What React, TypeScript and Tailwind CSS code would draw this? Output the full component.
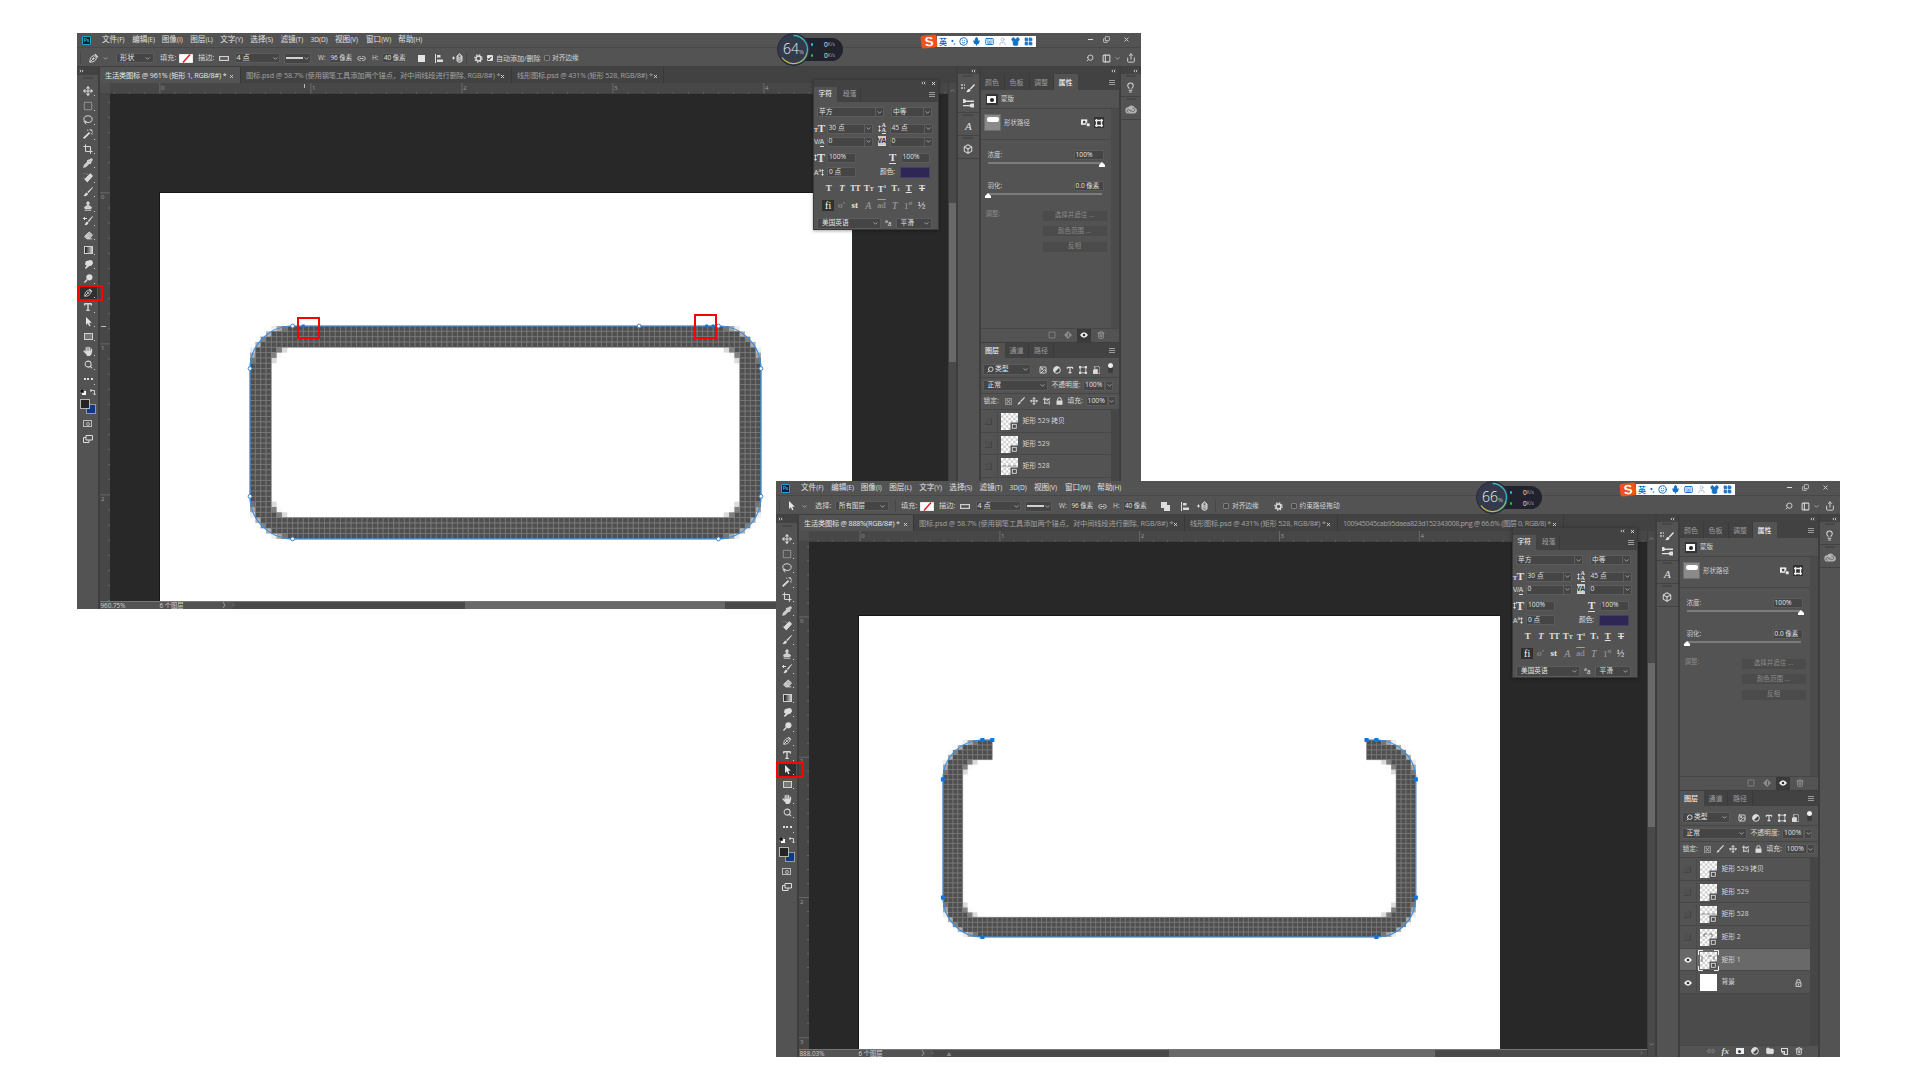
import React from "react";
import {
  Move, SquareDashed, Lasso, Crop, Pipette, Stamp, Eraser, Type,
  Search, Trash2, Lightbulb, Box, Smile, Mic, Keyboard, Shirt, LayoutGrid, Link2,
  Image as ImageIcon, Folder, Share, User, Check,
  X, Copy, PanelLeft, Minus,
} from "lucide-react";

type Variant = "pen" | "select";

const ink = "#dcdcdc";

/* ---------- small shared pieces ---------- */

const Chev = ({ c = "" }: { c?: string }) => (
  <svg viewBox="0 0 6 4" className={`h-[3px] w-[5px] shrink-0 ${c}`} fill="none" stroke="#bdbdbd" strokeWidth="1">
    <path d="M.5.5 3 3 5.5.5" />
  </svg>
);

const Burger = ({ c = "" }: { c?: string }) => (
  <svg viewBox="0 0 6 5" className={`h-[5px] w-[6px] shrink-0 ${c}`} fill="#9a9a9a">
    <path d="M0 0h6v1H0zM0 2h6v1H0zM0 4h6v1H0z" />
  </svg>
);

const Arrows = ({ flip = false, c = "" }: { flip?: boolean; c?: string }) => (
  <svg viewBox="0 0 6 4" className={`h-[4px] w-[5px] shrink-0 ${flip ? "rotate-180" : ""} ${c}`} fill="none" stroke="#d0d0d0" strokeWidth="1.1">
    <path d="M2.5.5 1 2l1.500 1.500M5.200.5 3.700 2l1.500 1.500" />
  </svg>
);

const Cursor = ({ c = "" }: { c?: string }) => (
  <svg viewBox="0 0 8 12" className={`h-[10px] w-[7px] shrink-0 ${c}`} fill="#e6e6e6">
    <path d="M1 0v9.500l2.200-2 1.600 3.700 1.600-.7L4.900 7H8z" />
  </svg>
);

const PenNib = ({ s = 10 }: { s?: number }) => (
  <svg viewBox="0 0 12 12" width={s} height={s} className="shrink-0" fill="none" stroke={ink} strokeWidth="1.100">
    <path d="M1 11c0-4 1-7 5-8l3 3c-1 4-4 5-8 5z" />
    <path d="M1 11 5 7" />
    <path d="M7 1.500 10.500 5" strokeWidth="1.800" />
    <circle cx="5.400" cy="6.600" r=".8" fill={ink} />
  </svg>
);

const Gear = () => (
  <svg viewBox="0 0 10 10" className="h-[9px] w-[9px] shrink-0" fill="none" stroke={ink}>
    <circle cx="5" cy="5" r="2.700" strokeWidth="1.700" />
    <circle cx="5" cy="5" r="4.100" strokeWidth="1.300" strokeDasharray="1.610 1.610" />
  </svg>
);

const EyeGlyph = () => (
  <svg viewBox="0 0 8 6" className="h-[6px] w-[8px] shrink-0">
    <path d="M0 3Q4-2.500 8 3 4 8.500 0 3z" fill="#f2f2f2" />
    <circle cx="4" cy="3" r="1.300" fill="#2c2c2c" />
  </svg>
);

const LockGlyph = ({ c = "", open = false }: { c?: string; open?: boolean }) => (
  <svg viewBox="0 0 7 8" className={`h-[8px] w-[7px] shrink-0 ${c}`} fill="none" stroke={ink}>
    <path d="M1.800 3.500V2.300a1.700 1.700 0 0 1 3.400 0v1.200" />
    {open ? <path d="M1 3.800h5v3.600H1zM3.500 5v1.300" strokeWidth=".9" /> : <path d="M.5 3.500h6v4.300h-6z" fill={ink} stroke="none" />}
  </svg>
);

const HalfDisc = ({ c = "" }: { c?: string }) => (
  <svg viewBox="0 0 8 8" className={`h-[8px] w-[8px] shrink-0 ${c}`}>
    <circle cx="4" cy="4" r="3.300" fill="#444" stroke={ink} strokeWidth="1" />
    <path d="M6.500 1.500a3.500 3.500 0 0 0-5 5z" fill={ink} />
  </svg>
);

const BoxedPoints = ({ c = "" }: { c?: string }) => (
  <svg viewBox="0 0 8 8" className={`h-[8px] w-[8px] shrink-0 ${c}`} fill={ink}>
    <path d="M0 0h2.200v2.200H0zM5.800 0H8v2.200H5.800zM0 5.800h2.200V8H0zM5.800 5.800H8V8H5.800z" />
    <path d="M1.200 1.200h5.600v5.600H1.200z" fill="none" stroke={ink} strokeWidth=".8" />
  </svg>
);

/* ---------- menu bar ---------- */

const menus: [string, string, string][] = [
  ["文件", "(F)", "w-[30.2px]"],
  ["编辑", "(E)", "w-[29.6px]"],
  ["图像", "(I)", "w-[28.5px]"],
  ["图层", "(L)", "w-[29.9px]"],
  ["文字", "(Y)", "w-[30.2px]"],
  ["选择", "(S)", "w-[30.1px]"],
  ["滤镜", "(T)", "w-[30px]"],
  ["", "3D(D)", "w-[24.5px]"],
  ["视图", "(V)", "w-[31px]"],
  ["窗口", "(W)", "w-[32.4px]"],
  ["帮助", "(H)", "w-[30px]"],
];

const MenuBar = () => (
  <div className="flex h-[15px] shrink-0 items-center border-b border-[#484848] text-[7.600px] leading-none text-[#e2e2e2]">
    <div className="flex w-[25px] shrink-0 pl-[5px]">
      <div className="flex h-[9px] w-[9px] items-center justify-center rounded-[1px] border border-[#1da6cf] bg-[#04202c] text-[5px] font-semibold text-[#31c5f0]">
        Ps
      </div>
    </div>
    {menus.map(([a, b, w]) => (
      <span key={b} className={`shrink-0 whitespace-nowrap ${w}`}>
        {a}
        <span className="text-[6.600px]">{b}</span>
      </span>
    ))}
    <div className="mb-[2px] ml-auto flex items-center pr-[11px]">
      <Minus size={7} strokeWidth={4} color={ink} className="mr-[9px]" />
      <Copy size={7} strokeWidth={2.500} color={ink} className="mr-[13px] -scale-x-100 rotate-180" />
      <X size={7} strokeWidth={3} color={ink} />
    </div>
  </div>
);

/* ---------- options bar ---------- */

const Field = ({ c, children }: { c: string; children?: React.ReactNode }) => (
  <div className={`flex shrink-0 items-center rounded-[1px] border border-[#5b5b5b] bg-[#454545] leading-none text-[#e4e4e4] ${c}`}>{children}</div>
);

const FillSwatch = () => (
  <svg viewBox="0 0 14 9" className="h-[9px] w-[14px]">
    <rect width="14" height="9" fill="#fff" stroke="#aaa" strokeWidth=".5" />
    <path d="M4 8.500 11 .5" stroke="#e0202a" strokeWidth="1.500" />
  </svg>
);

const StrokeGlyph = () => (
  <svg viewBox="0 0 10 5" className="h-[5px] w-[10px]" fill="none" stroke="#cfcfcf" strokeWidth="1.200">
    <rect x=".6" y=".6" width="8.800" height="3.800" />
  </svg>
);

const AlignGlyph = () => (
  <svg viewBox="0 0 8 9" className="h-[9px] w-[8px]" fill={ink}>
    <path d="M0 0h1v9H0zM2 1h3.500v2.500H2zM2 5.500h6V8H2z" />
  </svg>
);

const ArrangeGlyph = () => (
  <svg viewBox="0 0 11 10" className="h-[10px] w-[11px]" fill="none" stroke={ink} strokeWidth="1">
    <path d="M0 5h3M1.500 3.500v3" />
    <path d="M5 3 7.500.8 10 3 7.500 4.500zM5 5l2.500 1.600L10 5M5 3v5l2.500 1.500L10 8V3" fill="#8f8f8f" />
  </svg>
);

const CheckBox = ({ on = false }: { on?: boolean }) =>
  on ? (
    <span className="flex h-[6px] w-[6px] items-center justify-center rounded-[1px] bg-[#e4e4e4]">
      <Check size={5} strokeWidth={5} color="#333" />
    </span>
  ) : (
    <span className="block h-[6px] w-[6px] rounded-[1px] border border-[#7d7d7d] bg-[#474747]" />
  );

const Sep = ({ c }: { c: string }) => (
  <div className={`flex shrink-0 ${c}`}>
    <div className="h-[12px] w-px bg-[#464646]" />
  </div>
);

const ShapeOptions = ({ w = "w-[13px]" }: { w?: string }) => (
  <>
    <div className="w-[19px] shrink-0">填充:</div>
    <div className="w-[19px] shrink-0"><FillSwatch /></div>
    <div className="w-[21px] shrink-0">描边:</div>
    <div className="w-[15.500px] shrink-0"><StrokeGlyph /></div>
    <Field c="h-[10px] w-[45px] justify-between px-[1px]"><span>4 点</span><Chev /></Field>
    <div className="w-[4px] shrink-0" />
    <Field c="h-[11px] w-[27px] justify-between px-[1px]">
      <span className="h-[1.500px] w-[17px] shrink-0 bg-[#d0d0d0]" /><Chev />
    </Field>
    <div className="w-[7.500px] shrink-0" />
    <div className="w-[10.500px] shrink-0 text-[6.500px]">W:</div>
    <Field c="h-[10px] w-[23.500px] pl-[1px] text-[6.400px] tracking-[-0.1px] whitespace-nowrap">96 像素</Field>
    <div className="flex w-[20px] shrink-0 pl-[5px]"><Link2 size={9} strokeWidth={2.300} /></div>
    <div className="w-[10px] shrink-0 text-[6.500px]">H:</div>
    <Field c="h-[10px] w-[23px] pl-[1px] text-[6.400px] tracking-[-0.1px] whitespace-nowrap">40 像素</Field>
    <div className={`shrink-0 ${w}`} />
  </>
);

const OptionsBar = ({ variant }: { variant: Variant }) => (
  <div className="flex h-[19px] shrink-0 items-center border-b border-[#3f3f3f] pt-[2px] pl-[3px] text-[7.200px] leading-none text-[#d4d4d4]">
    <div className="w-[9px] shrink-0"><div className="h-[12px] w-px bg-[#464646]" /></div>
    <div className="w-[14px] shrink-0">{variant === "pen" ? <PenNib /> : <Cursor />}</div>
    {variant === "pen" ? (
      <>
        <Chev c="mr-[8px]" />
        <Field c="h-[10px] w-[38px] justify-between px-[3px]"><span>形状</span><Chev /></Field>
        <div className="w-[6px] shrink-0" />
        <ShapeOptions />
        <div className="flex w-[17px] shrink-0"><div className="h-[7px] w-[7px] bg-[#e4e4e4]" /></div>
        <div className="w-[17px] shrink-0"><AlignGlyph /></div>
        <div className="w-[14px] shrink-0"><ArrangeGlyph /></div>
        <Sep c="w-[7.500px]" />
        <div className="w-[13px] shrink-0"><Gear /></div>
        <div className="w-[9.500px] shrink-0"><CheckBox on /></div>
        <div className="w-[47.500px] shrink-0 text-[7px] whitespace-nowrap">自动添加/删除</div>
        <div className="w-[8.500px] shrink-0"><CheckBox /></div>
        <div className="shrink-0 text-[6.700px] whitespace-nowrap">对齐边缘</div>
      </>
    ) : (
      <>
        <Chev c="mr-[8px]" />
        <div className="w-[20px] shrink-0">选择:</div>
        <Field c="h-[10px] w-[54px] justify-between px-[3px] text-[6.500px]"><span>所有图层</span><Chev /></Field>
        <div className="w-[6px] shrink-0" />
        <Sep c="w-[6px]" />
        <ShapeOptions w="w-[15px]" />
        <div className="w-[19.500px] shrink-0">
          <svg viewBox="0 0 9 9" className="h-[9px] w-[9px]" fill={ink}><path d="M0 0h6v3h3v6H3V6H0z" /></svg>
        </div>
        <div className="w-[16px] shrink-0"><AlignGlyph /></div>
        <div className="w-[18px] shrink-0"><ArrangeGlyph /></div>
        <Sep c="w-[8px]" />
        <div className="w-[9.500px] shrink-0"><CheckBox /></div>
        <div className="w-[42px] shrink-0 text-[6.700px] whitespace-nowrap">对齐边缘</div>
        <div className="w-[16.500px] shrink-0"><Gear /></div>
        <div className="w-[9px] shrink-0"><CheckBox /></div>
        <div className="shrink-0 text-[6.700px] whitespace-nowrap">约束路径拖动</div>
      </>
    )}
    <div className="ml-auto flex items-center pr-[5px]">
      <Search size={8} strokeWidth={2.800} className="mr-[8px] -scale-x-100" />
      <PanelLeft size={9} strokeWidth={2.800} className="mr-[4px]" />
      <Chev c="mr-[6px]" />
      <Share size={10} strokeWidth={2.300} />
    </div>
  </div>
);

/* ---------- toolbar ---------- */

const tools: React.ReactNode[] = [
  <Move size={10} strokeWidth={2.700} />,
  <SquareDashed size={10} strokeWidth={2} />,
  <Lasso size={10} strokeWidth={2.400} />,
  <svg viewBox="0 0 10 10" width="10" height="10" fill={ink}><path d="M6 3 7.200 4.200 1.400 10 0 8.700zM4.500.5l1 1-.6.6-1-1zM8.500.3l1 .9L8.200 2.500l-1-.9zM8.600 4l1.200 1-.7.7-1.100-1zM6.500 0h1v1h-1zM9 2.600h1v1H9z" /></svg>,
  <Crop size={10} strokeWidth={2.700} />,
  <Pipette size={10} strokeWidth={2.600} fill="#bbb" />,
  <svg viewBox="0 0 10 10" width="10" height="10"><path d="M7.300.6 9.600 2.900 4.300 8.900 1.700 6.300z" fill="#d8d8d8" stroke="#eee" strokeWidth=".7" /><path d="M4.700 2A2.800 2.800 0 1 0 1.600 5.500" fill="none" stroke="#aaa" strokeWidth=".9" strokeDasharray="1 .9" /></svg>,
  <svg viewBox="0 0 10 10" width="10" height="10" fill={ink}><path d="M9.500 0 10 .6 5.500 6 4.300 4.900zM3.700 5.500l1.300 1.200C4.700 8.700 2.500 9.500.5 9c1.200-.8 1-3 3.200-3.500z" /></svg>,
  <Stamp size={10} strokeWidth={2.400} fill="#ccc" />,
  <svg viewBox="0 0 10 10" width="10" height="10" fill={ink}><path d="M9.500 0 10 .6 6 6 4.800 4.900zM4.200 5.500l1.300 1.200C5.200 8.700 3 9.500 1.500 9c1-.8.8-3 2.700-3.500zM0 2h4v1H0zM1 1h1v3H1z" /></svg>,
  <Eraser size={9} strokeWidth={2.500} fill="#bbb" />,
  <div className="h-[8px] w-[9px] border border-[#d0d0d0] bg-linear-to-r from-[#222] to-[#ccc]" />,
  <svg viewBox="0 0 10 10" width="9" height="9" fill={ink}><path d="M2 1.500 7 0c2 0 3 1.500 3 3.500L8.500 6 5.500 7 2 10 1 9l2-3-2-1z" /></svg>,
  <svg viewBox="0 0 10 10" width="9" height="9" fill={ink}><circle cx="6" cy="3.700" r="3.400" /><path d="M3 5.500 4.200 6.700 1 10 0 9z" /></svg>,
  <PenNib s={9} />,
  <Type size={10} strokeWidth={3.400} />,
  <Cursor />,
  <div className="h-[7px] w-[9px] border border-[#d0d0d0] bg-[#777]" />,
  <svg viewBox="0 0 10 10" width="10" height="10" stroke={ink} strokeWidth="1.200" strokeLinecap="round" fill={ink}>
    <path d="M3.200 5V1.700M5 5V1M6.700 5V1.500M8.500 5.500V3M1 5l1.800 2" /><path d="M3 5.300h5.500L7.800 8.500 6.500 9.400H4.300z" />
  </svg>,
  <Search size={9} strokeWidth={2.700} />,
  <div className="flex gap-[1.500px]">
    <i className="h-[2px] w-[2px] bg-[#ddd]" /><i className="h-[2px] w-[2px] bg-[#ddd]" /><i className="h-[2px] w-[2px] bg-[#ddd]" />
  </div>,
];

const Toolbar = ({ variant }: { variant: Variant }) => {
  const active = variant === "pen" ? 14 : 16;
  return (
    <div className="mr-[1.500px] flex w-[21px] shrink-0 flex-col bg-[#535353] text-[#d6d6d6]">
      <div className="flex h-[8px] shrink-0 items-center bg-[#424242] pl-[2px]"><Arrows flip /></div>
      <div className="flex h-[9px] shrink-0 justify-center pt-[2px]"><div className="h-[2px] w-[10px] bg-[#484848]" /></div>
      {tools.map((t, i) => (
        <div key={i} className="relative flex h-[14.410px] shrink-0 items-center justify-center pr-[1px] pl-[2px]">
          <div className={`flex h-[13px] w-[17px] items-center justify-center ${i === active ? "bg-[#303030]" : ""}`}>{t}</div>
          <i className="absolute right-[3px] bottom-[2px] h-[1px] w-[1px] bg-[#ccc]" />
          {i === active && (
            <div className={`absolute left-0 z-10 h-[16px] border-2 border-[#f00] ${variant === "pen" ? "w-[26px]" : "w-[28px]"}`} />
          )}
        </div>
      ))}
      <div className="flex h-[11px] shrink-0 items-center gap-[4px] pl-[3px]">
        <svg viewBox="0 0 6 6" className="h-[6px] w-[6px]"><rect x="2" y="2" width="4" height="4" fill="#fff" /><rect width="4" height="4" fill="#111" stroke="#ccc" strokeWidth=".5" /></svg>
        <svg viewBox="0 0 6 6" className="h-[6px] w-[6px]" fill="none" stroke="#ccc"><path d="M0 1.500h4.500V6M1.500 0 0 1.500 1.500 3M3 4.500 4.500 6 6 4.500" /></svg>
      </div>
      <div className="relative h-[18px] shrink-0">
        <div className="absolute top-[6px] left-[8.500px] h-[10px] w-[10px] border border-[#9a9a9a] bg-[#0b3a86]" />
        <div className="absolute top-px left-[3px] h-[10px] w-[10px] border border-[#b5b5b5] bg-[#242424]" />
      </div>
      <div className="flex h-[16px] shrink-0 items-center justify-center">
        <div className="flex h-[7px] w-[9px] items-center justify-center border border-[#bbb]"><i className="h-[4px] w-[4px] rounded-full border border-[#bbb]" /></div>
      </div>
      <div className="flex h-[14px] shrink-0 items-center justify-center">
        <svg viewBox="0 0 10 8" className="h-[8px] w-[10px]" fill="none" stroke={ink}><path d="M3 .5h6.500v4.500H3z" /><path d="M3 2.500H.5v5h5.500V5" /></svg>
      </div>
    </div>
  );
};

/* ---------- document ---------- */

const range = (n: number) => Array.from({ length: n }, (_, i) => i);

const HRuler = ({ zero, step, mark }: { zero: number; step: number; mark?: number }) => (
  <svg className="h-[11px] w-[848px] shrink-0" viewBox="0 0 848 11" fontSize="6" fill="#9c9c9c">
    <rect width="848" height="11" fill="#474747" />
    <rect width="10" height="11" fill="#4f4f4f" />
    {range(62).map((i) => {
      const x = zero + (i - 4) * (step / 10);
      const major = (i - 4) % 10 === 0;
      return x > 14 ? <rect key={i} x={x} y={major ? 0 : 9} width=".8" height={major ? 11 : 2} fill="#707070" /> : null;
    })}
    {range(5).map((i) => <text key={i} x={zero + i * step + 1.500} y="6.500">{i}</text>)}
    {mark && <rect x={mark} y="1" width="1" height="4" fill="#bbb" />}
    <rect y="10.500" width="848" height=".5" fill="#3a3a3a" />
  </svg>
);

const VRuler = ({ zero, step, mark }: { zero: number; step: number; mark?: number }) => (
  <svg className="h-[507px] w-[10px] shrink-0" viewBox="0 0 10 507" fontSize="6" fill="#9c9c9c">
    <rect width="10" height="507" fill="#474747" />
    {range(44).map((i) => {
      const y = zero + (i - 9) * (step / 10);
      const major = (i - 9) % 10 === 0;
      return y > 0 ? <rect key={i} y={y} x={major ? 0 : 8} height=".8" width={major ? 10 : 2} fill="#707070" /> : null;
    })}
    {range(4).map((i) => <text key={i} x="1" y={zero + i * step + 6.500}>{i}</text>)}
    {mark && <rect x="1" y={mark} width="5" height="1" fill="#bbb" />}
  </svg>
);

const inRound = (x: number, y: number, x0: number, y0: number, x1: number, y1: number, r: number) => {
  if (x < x0 || x > x1 || y < y0 || y > y1) return false;
  const cx = Math.min(Math.max(x, x0 + r), x1 - r);
  const cy = Math.min(Math.max(y, y0 + r), y1 - r);
  return (x - cx) ** 2 + (y - cy) ** 2 <= r * r;
};

/* Pixel coverage of a 96x40 rounded frame with a 4px inner stroke. */
const pixels = range(96 * 40)
  .map((n) => {
    const px = n % 96;
    const py = Math.floor(n / 96);
    let hit = 0;
    for (let a = 0; a < 4; a++)
      for (let b = 0; b < 4; b++) {
        const x = px + (a + 0.5) / 4;
        const y = py + (b + 0.5) / 4;
        if (inRound(x, y, 0, 0, 96, 40, 8) && !inRound(x, y, 4, 4, 92, 36, 4)) hit++;
      }
    return { x: px, y: py, v: hit / 16 };
  })
  .filter((p) => p.v > 0);

const PixelFrame = ({ s, open }: { s: number; open: boolean }) => {
  const shown = pixels.filter((p) => !(open && p.y < 4 && p.x >= 10 && p.x < 86));
  const full = shown.filter((p) => p.v === 1);
  const d = full.map((p) => `M${p.x} ${p.y}h1v1h-1z`).join("");
  const outline = open
    ? "M10 0H8A8 8 0 0 0 0 8V32A8 8 0 0 0 8 40H88A8 8 0 0 0 96 32V8A8 8 0 0 0 88 0H86"
    : "M8 0H88A8 8 0 0 1 96 8V32A8 8 0 0 1 88 40H8A8 8 0 0 1 0 32V8A8 8 0 0 1 8 0Z";
  const hollow = [[8, 0], [73.100, 0], [88, 0], [0, 8], [96, 8], [0, 32], [96, 32], [8, 40], [88, 40]];
  const solid = open
    ? [[8, 0], [10, 0], [86, 0], [88, 0], [0, 8], [96, 8], [0, 32], [96, 32], [8, 40], [88, 40]]
    : [[10, 0], [85.800, 0], [87, 0]];
  return (
    <svg width={96 * s + 10} height={40 * s + 10} viewBox={`${-5 / s} ${-5 / s} ${96 + 10 / s} ${40 + 10 / s}`}>
      {shown.filter((p) => p.v < 1).map((p) => (
        <rect key={`${p.x}-${p.y}`} x={p.x} y={p.y} width="1" height="1" fill="#585858" opacity={p.v ** 1.300} />
      ))}
      <path d={d} fill="#4f4f4f" stroke="#808080" strokeWidth=".1" />
      <path d={outline} fill="none" stroke="#3f8edb" strokeWidth={1.200 / s} />
      {!open && hollow.map(([x, y]) => (
        <circle key={`h${x}-${y}`} cx={x} cy={y} r={1.900 / s} fill="#fff" stroke="#3a80c4" strokeWidth={1 / s} />
      ))}
      {solid.map(([x, y]) => (
        <rect key={`s${x}-${y}`} x={x - (open ? 2.100 : 1.600) / s} y={y - (open ? 2.100 : 1.600) / s} width={(open ? 4.200 : 3.200) / s} height={(open ? 4.200 : 3.200) / s} rx={0.6 / s} fill="#0f75dc" />
      ))}
    </svg>
  );
};

type Tab = { text: string; box: string; label: string };

const DocTabs = ({ tabs }: { tabs: Tab[] }) => (
  <div className="flex h-[16px] shrink-0 bg-[#424242] text-[7.200px] leading-none">
    {tabs.map((t, i) => (
      <div key={t.text} className={`flex shrink-0 items-center border-r border-[#383838] pt-[2px] pl-[5.500px] ${t.box} ${i === 0 ? "bg-[#535353] text-[#e6e6e6]" : "text-[#a2a2a2]"}`}>
        <span className={`shrink-0 whitespace-nowrap ${t.label}`}>{t.text}</span>
        <X size={5} strokeWidth={4.500} color="#d0d0d0" />
      </div>
    ))}
  </div>
);

const Document = ({ variant }: { variant: Variant }) => {
  const pen = variant === "pen";
  const tabs: Tab[] = pen
    ? [
        { text: "生活类图标 @ 961% (矩形 1, RGB/8#) *", box: "w-[141px]", label: "w-[124px] tracking-[-0.16px]" },
        { text: "图标.psd @ 58.7% (使用钢笔工具添加两个锚点，对中间线段进行删除, RGB/8#) *", box: "w-[271px]", label: "w-[254px] tracking-[-0.08px]" },
        { text: "线形图标.psd @ 431% (矩形 528, RGB/8#) *", box: "w-[152px]", label: "w-[136px] tracking-[-0.16px]" },
      ]
    : [
        { text: "生活类图标 @ 888%(RGB/8#) *", box: "w-[115px]", label: "w-[99px] tracking-[-0.2px]" },
        { text: "图标.psd @ 58.7% (使用钢笔工具添加两个锚点，对中间线段进行删除, RGB/8#) *", box: "w-[271px]", label: "w-[254px] tracking-[-0.08px]" },
        { text: "线形图标.psd @ 431% (矩形 528, RGB/8#) *", box: "w-[153px]", label: "w-[136px] tracking-[-0.16px]" },
        { text: "100945045cab95daea823d152343008.png @ 66.6% (图层 0, RGB/8) *", box: "w-[226px]", label: "w-[209px] tracking-[-0.36px]" },
      ];
  return (
    <div className="mr-[2px] flex w-[856.500px] shrink-0 flex-col">
      <DocTabs tabs={tabs} />
      <div className="flex min-h-0 flex-1">
        <div className="flex w-[848px] shrink-0 flex-col">
          <HRuler zero={pen ? 59.500 : 60.700} step={pen ? 151 : 139.800} mark={pen ? 204 : undefined} />
          <div className="flex h-[507px] shrink-0">
            {pen ? <VRuler zero={98.500} step={151} mark={232} /> : <VRuler zero={74.500} step={140.300} />}
            <div className="relative h-full w-[838px] overflow-hidden bg-[#282828]">
              <div
                className={
                  pen
                    ? "absolute top-[97.500px] left-[49px] h-[410px] w-[693.500px] border-t border-l border-[#161616] bg-white"
                    : "absolute top-[73px] left-[49.500px] h-[434px] w-[642px] border-t border-l border-[#161616] bg-white"
                }
              />
              <div className={pen ? "absolute top-[226.500px] left-[135.800px]" : "absolute top-[192.500px] left-[129.800px]"}>
                <PixelFrame s={pen ? 5.323 : 4.925} open={!pen} />
              </div>
              {pen && (
                <>
                  <div className="absolute top-[223px] left-[187.500px] h-[22px] w-[23px] border-2 border-[#f00]" />
                  <div className="absolute top-[220px] left-[584.500px] h-[25px] w-[23px] border-2 border-[#f00]" />
                </>
              )}
            </div>
          </div>
          <div className="flex h-[8px] items-center border-t border-[#777] bg-[#4a4a4a] text-[6.300px] leading-none text-[#d4d4d4]">
            <span className="h-full w-[60px] shrink-0 bg-[#535353] pl-px leading-[7px] whitespace-nowrap">{pen ? "960.75%" : "888.03%"}</span>
            <span className="h-full w-[63px] shrink-0 bg-[#535353] leading-[7px] whitespace-nowrap">6 个图层</span>
            <span className="h-full w-[10px] shrink-0 bg-[#535353] leading-[6px]">〉</span>
            <span className="w-[15px] shrink-0 text-[#999]">‹</span>
            <span className="w-[12px] shrink-0 pt-[2px] text-[5px] text-[#888]">{pen ? "" : "▲"}</span>
            <span className={pen ? "ml-[205px] h-full w-[260px] bg-[#696969]" : "ml-[210px] h-full w-[266px] bg-[#696969]"} />
            <span className="ml-auto pr-[4px] text-[#999]">›</span>
          </div>
        </div>
        <div className="ml-px flex w-[8px] flex-col items-center bg-[#494949]">
          <Chev c="mt-[6px] rotate-180 opacity-60" />
          <div className={pen ? "mt-[111px] h-[158.500px] w-[7px] bg-[#696969]" : "mt-[123px] h-[164px] w-[7px] bg-[#696969]"} />
          <Chev c="mt-auto mb-[11px] opacity-60" />
        </div>
      </div>
    </div>
  );
};

/* ---------- icon dock ---------- */

const Grip = () => (
  <div className="flex h-[4px] shrink-0 items-center justify-center"><div className="h-[2px] w-[10px] bg-[#474747]" /></div>
);

const Dock = () => (
  <div className="mr-[2px] flex w-[20.500px] shrink-0 flex-col bg-[#535353] text-[#d6d6d6]">
    <div className="flex h-[7px] shrink-0 items-center justify-end bg-[#424242] pr-[3px]"><Arrows /></div>
    <div className="h-[39px] shrink-0 border-b border-[#434343]">
      <Grip />
      <div className="flex h-[18px] items-center justify-center gap-px pt-[2px]">
        <div className="mb-[4px] grid grid-cols-2 gap-[1px]">
          <i className="h-[2px] w-[1.500px] bg-[#aaa]" /><i className="h-[2px] w-[1.500px] bg-[#aaa]" /><i className="h-[2px] w-[1.500px] bg-[#aaa]" /><i className="h-[2px] w-[1.500px] bg-[#aaa]" />
        </div>
        <svg viewBox="0 0 10 10" className="h-[9px] w-[9px]" fill="#e6e6e6"><path d="M9 0 10 1 5.500 6 4.300 4.900zM3.700 5.200l1.500 1.500C4.700 9 2.500 9.500 0 9c1.500-.8 1.500-3.300 3.700-3.800z" /></svg>
      </div>
      <div className="flex h-[15px] items-center justify-center">
        <svg viewBox="0 0 11 9" className="h-[9px] w-[11px]" fill="#e0e0e0"><path d="M0 0h2l1 1.500h8v1.500H3L2 4H0zM0 6h6.500L8 4.500h3v4H8L6.500 7.300H0z" /></svg>
      </div>
    </div>
    <div className="h-[23px] shrink-0 border-b border-[#434343]">
      <Grip />
      <div className="pt-[1px] text-center font-['Liberation_Serif',serif] text-[11px] leading-[16px] text-[#e2e2e2] italic">A</div>
    </div>
    <div className="h-[23px] shrink-0 border-b border-[#434343]">
      <Grip />
      <div className="flex justify-center pt-[4px]"><Box size={10} strokeWidth={2.500} /></div>
    </div>
  </div>
);

const EndDock = () => (
  <div className="flex flex-1 flex-col bg-[#535353] text-[#d6d6d6]">
    <div className="flex h-[7px] shrink-0 items-center justify-end bg-[#424242] pr-[3px]"><Arrows /></div>
    <div className="h-[23px] shrink-0 border-b border-[#434343]">
      <Grip />
      <div className="flex justify-center pt-[4px]"><Lightbulb size={11} strokeWidth={2.200} /></div>
    </div>
    <div className="h-[23px] shrink-0 border-b border-[#434343]">
      <Grip />
      <div className="flex justify-center pt-[4px]">
        <svg viewBox="0 0 13 10" className="h-[9px] w-[12px]">
          <path d="M4 9.500A3.500 3.500 0 0 1 3.500 2.500 4.300 4.300 0 0 1 11 3a3.400 3.400 0 0 1-1.500 6.500z" fill="#b5b5b5" />
          <path d="M6.500 7.500 4.800 5.800a1.500 1.500 0 1 0-1 2.200M5.500 5l2 2a2 2 0 1 0 .5-3.500" fill="none" stroke="#555" strokeWidth=".9" />
        </svg>
      </div>
    </div>
  </div>
);

/* ---------- properties and layers ---------- */

const Track = ({ right = false }: { right?: boolean }) => (
  <div className="relative flex h-[8px] w-[114px] shrink-0 flex-col pt-[1.500px]">
    <div className="h-[1.500px] bg-[#7c7c7c]" />
    <svg viewBox="0 0 6 5" className={`absolute top-[1.500px] h-[5px] w-[6px] ${right ? "-right-[3px]" : "-left-[3px]"}`} fill="#fff"><path d="M3 0 6 3v2H0V3z" /></svg>
  </div>
);

const Properties = () => (
  <div className="flex h-[267.500px] shrink-0 flex-col">
    <div className="flex h-[16px] shrink-0 items-center bg-[#424242] text-[7px] leading-none text-[#9c9c9c]">
      {["颜色", "色板", "调整"].map((t) => (
        <span key={t} className="flex h-full w-[24.500px] items-center border-r border-[#3a3a3a] pl-[4.500px]">{t}</span>
      ))}
      <span className="flex h-full w-[24px] items-center bg-[#535353] pl-[4.500px] font-medium text-[#eee]">属性</span>
      <Burger c="mr-[4px] ml-auto" />
    </div>
    <div className="flex h-[19px] shrink-0 items-center border-b border-[#464646] pt-[1px] pl-[5px] text-[6.500px] leading-none text-[#d8d8d8]">
      <span className="mr-[3px] flex h-[11px] w-[12.500px] items-center justify-center bg-[#333]">
        <span className="flex h-[7px] w-[9px] items-center justify-center bg-white"><i className="h-[4px] w-[4px] rounded-full bg-[#222]" /></span>
      </span>
      蒙版
    </div>
    <div className="flex min-h-0 flex-1 text-[6.500px] leading-none text-[#cfcfcf]">
      <div className="flex w-[130px] flex-col">
        <div className="flex h-[30.500px] shrink-0 items-center border-b border-[#464646] pb-[2px] pl-[3.500px]">
          <span className="mr-[3px] h-[17px] w-[17px] border border-[#6c6c6c] bg-[#8a8a8a] pt-[2px] pl-[1.500px]">
            <i className="block h-[5px] w-[12px] rounded-[2px] bg-white" />
          </span>
          <span className="w-[77px]">形状路径</span>
          <svg viewBox="0 0 10 8" className="mr-[4px] h-[8px] w-[9px]"><path d="M0 0h7v6H0z" fill="#eee" /><circle cx="3.500" cy="3" r="1.500" fill="#444" /><path d="M6 4h4v4H6z" fill="#eee" stroke="#444" strokeWidth=".7" /></svg>
          <span className="flex h-[11px] w-[10px] items-center justify-center bg-[#333]">
            <svg viewBox="0 0 8 8" className="h-[8px] w-[8px]" fill="none" stroke="#eee" strokeWidth="1.300"><path d="M0 1.500h8M0 6.500h8M1.500 0v8M6.500 0v8" /></svg>
          </span>
        </div>
        <div className="flex h-[21px] shrink-0 items-center justify-between pt-[10px] pr-[7px] pl-[7px]">
          浓度:
          <Field c="h-[10px] w-[30px] pl-[1px] text-[6.700px]">100%</Field>
        </div>
        <div className="pl-[7.500px]"><Track right /></div>
        <div className="flex h-[23px] shrink-0 items-center justify-between pt-[12px] pr-[7px] pl-[7px]">
          羽化:
          <Field c="h-[10px] w-[30px] pl-[1px] text-[6.500px] whitespace-nowrap">0.0 像素</Field>
        </div>
        <div className="pl-[7.500px]"><Track /></div>
        <div className="mt-[11px] flex pr-[4px] pl-[5px] text-[#8b8b8b]">
          <span className="w-[57px]">调整:</span>
          <div className="flex w-[64px] flex-col gap-[5.500px]">
            {["选择并遮住 ...", "颜色范围 ...", "反相"].map((t) => (
              <span key={t} className="flex h-[10px] items-center justify-center bg-[#4b4b4b]">{t}</span>
            ))}
          </div>
        </div>
      </div>
      <div className="flex-1 bg-[#4b4b4b]" />
    </div>
    <div className="flex h-[14px] shrink-0 items-center border-t border-[#464646] pl-[67px] text-[#9a9a9a]">
      <SquareDashed size={8} strokeWidth={2.800} />
      <svg viewBox="0 0 8 8" className="ml-[8px] h-[8px] w-[8px]" fill="#8a8a8a"><path d="M4 0 8 4 4 8 0 4zM4 2v4h1V2z" fillRule="evenodd" /></svg>
      <span className="mx-[5px] flex h-full w-[14px] items-center justify-center bg-[#3a3a3a]"><EyeGlyph /></span>
      <Trash2 size={8} strokeWidth={2.600} className="ml-[1px]" />
    </div>
  </div>
);

const layers = [
  { name: "矩形 529 拷贝", mark: "" },
  { name: "矩形 529", mark: "" },
  { name: "矩形 528", mark: "M2 8h3M7 8h3M12 8h3" },
  { name: "矩形 2", mark: "M4 8V5h3M9 5h3v3" },
  { name: "矩形 1", mark: "M2 4v6M8 4h3M14 4v4" },
];

const Thumb = ({ mark, sel }: { mark: string; sel: boolean }) => (
  <div className="relative h-[17px] w-[17px]">
    <svg viewBox="0 0 17 17" className="h-[17px] w-[17px]">
      <rect width="17" height="17" fill="#fff" />
      {range(49).map((i) => ((i % 7) + Math.floor(i / 7)) % 2 ? <rect key={i} x={(i % 7) * 2.430} y={Math.floor(i / 7) * 2.430} width="2.430" height="2.430" fill="#cfcfcf" /> : null)}
      <path d={mark} stroke="#777" fill="none" />
      <rect x="9.500" y="9.500" width="7.500" height="7.500" fill="#4c4c4c" />
      <rect x="11.300" y="11.300" width="4" height="4" fill="none" stroke="#ddd" strokeWidth=".9" />
    </svg>
    {sel && (
      <svg viewBox="0 0 21 21" className="absolute -top-[2px] -left-[2px] h-[21px] w-[21px]" fill="none" stroke="#eee">
        <path d="M.5 5V.5H5M16 .5h4.500V5M20.500 16v4.500H16M5 20.500H.5V16" />
      </svg>
    )}
  </div>
);

const Layers = () => (
  <div className="flex min-h-0 flex-1 flex-col text-[6.800px] leading-none text-[#d8d8d8]">
    <div className="flex h-[15px] shrink-0 items-center bg-[#424242] text-[7px] text-[#9c9c9c]">
      <span className="flex h-full w-[24px] items-center bg-[#535353] pl-[4.500px] font-medium text-[#eee]">图层</span>
      <span className="flex h-full w-[24.500px] items-center border-r border-[#3a3a3a] pl-[5px]">通道</span>
      <span className="flex h-full w-[24.500px] items-center border-r border-[#3a3a3a] pl-[5px]">路径</span>
      <Burger c="mr-[4px] ml-auto" />
    </div>
    <div className="flex h-[19.500px] shrink-0 items-center border-b border-[#464646] pt-[5px] pl-[2px]">
      <Field c="h-[11px] w-[48px] pr-[2px] pl-[3px]"><Search size={7} strokeWidth={3} className="mr-[1.500px] shrink-0 -scale-x-100" />类型<Chev c="ml-auto" /></Field>
      <ImageIcon size={8} strokeWidth={2.800} className="ml-[8px]" />
      <HalfDisc c="ml-[6px]" />
      <Type size={8} strokeWidth={3.600} className="ml-[5px]" />
      <BoxedPoints c="ml-[5px]" />
      <svg viewBox="0 0 8 9" className="ml-[6px] h-[8px] w-[7px]"><path d="M2 0h4l2 2v7H5V4H2z" fill="none" stroke={ink} strokeWidth=".9" /><path d="M0 4h5v5H0z" fill={ink} /></svg>
      <span className="mb-[4px] ml-[8px] flex h-[10px] w-[5px] flex-col rounded-[2px] bg-[#3c3c3c]"><i className="h-[5px] w-[5px] rounded-full bg-[#eee]" /></span>
    </div>
    <div className="flex h-[16px] shrink-0 items-center border-b border-[#464646] pt-[1px] pl-[2px]">
      <Field c="h-[11px] w-[65px] justify-between pr-[2px] pl-[4px]"><span>正常</span><Chev /></Field>
      <span className="ml-[4px] w-[31.500px] whitespace-nowrap">不透明度:</span>
      <Field c="h-[10px] w-[22px] pl-[1px]">100%</Field>
      <Field c="h-[10px] w-[8px] justify-center"><Chev /></Field>
    </div>
    <div className="flex h-[16.500px] shrink-0 items-center border-b border-[#464646] pl-[3px]">
      <span className="w-[19px] whitespace-nowrap">锁定:</span>
      <svg viewBox="0 0 7 7" className="mr-[5px] ml-[2px] h-[7px] w-[7px]" fill="#bbb"><path d="M.4.400h6.200v6.200H.400z" fill="none" stroke="#a8a8a8" strokeWidth=".8" /><path d="M1.500 1.500h1.300v1.300H1.500zM4.200 1.500h1.300v1.300H4.200zM2.800 2.800h1.400v1.400H2.800zM1.500 4.200h1.300v1.300H1.500zM4.200 4.200h1.300v1.300H4.200z" /></svg>
      <svg viewBox="0 0 10 10" className="mr-[5px] h-[8px] w-[8px]" fill={ink}><path d="M9 0 10 1 5 6.300 3.700 5.200zM3.300 5.800l1.300 1.200C4.300 8.700 2.500 9.500.5 9.500c1.200-.8.800-3 2.800-3.700z" /></svg>
      <Move size={8} strokeWidth={3} className="mr-[5px]" />
      <svg viewBox="0 0 9 8" className="mr-[5px] h-[8px] w-[8px]" fill="none" stroke={ink}><path d="M0 2h7M2 0v7M1 6.500h5M7 3.500v4.500M4 4l4-3" strokeWidth="1.100" /></svg>
      <LockGlyph c="mr-[5px]" />
      <span className="w-[18px] whitespace-nowrap">填充:</span>
      <Field c="h-[10px] w-[22px] pl-[1px]">100%</Field>
      <Field c="h-[10px] w-[8px] justify-center"><Chev /></Field>
    </div>
    <div className="flex min-h-0 flex-1">
      <div className="flex w-[130px] flex-col bg-[#4b4b4b]">
        {layers.map((l, i) => {
          const sel = i === 4;
          return (
            <div key={l.name} className={`flex h-[22.700px] shrink-0 items-center border-b border-[#474747] pt-[1px] ${sel ? "bg-[#696969]" : "bg-[#535353]"}`}>
              <span className="mr-[3px] flex h-full w-[17px] items-center justify-center border-r border-[#4a4a4a]">
                {sel ? <EyeGlyph /> : <i className="h-[7px] w-[7px] border-r border-b border-[#444] bg-[#505050]" />}
              </span>
              <Thumb mark={l.mark} sel={sel} />
              <span className="ml-[5px] whitespace-nowrap">{l.name}</span>
            </div>
          );
        })}
        <div className="flex h-[22.700px] shrink-0 items-center border-b border-[#474747] bg-[#535353] pt-[1px]">
          <span className="mr-[3px] flex h-full w-[17px] items-center justify-center border-r border-[#4a4a4a]"><EyeGlyph /></span>
          <span className="h-[17px] w-[17px] bg-white" />
          <span className="ml-[5px]">背景</span>
          <LockGlyph open c="mr-[8px] ml-auto" />
        </div>
      </div>
      <div className="flex-1 bg-[#464646]" />
    </div>
    <div className="flex h-[12.500px] shrink-0 items-center border-t border-[#464646] pl-[27px]">
      <Link2 size={8} strokeWidth={2.400} color="#8c8c8c" className="mr-[7px]" />
      <span className="w-[14px] font-['Liberation_Serif',serif] text-[9px] font-bold italic">fx</span>
      <span className="mr-[7px] flex h-[6px] w-[8px] items-center justify-center bg-[#eee]"><i className="h-[3px] w-[3px] rounded-full bg-[#333]" /></span>
      <HalfDisc c="mr-[7px]" />
      <Folder size={8} strokeWidth={2.500} fill="#ddd" className="mr-[7px]" />
      <svg viewBox="0 0 8 8" className="mr-[7px] h-[7px] w-[7px]" fill="none" stroke={ink} strokeWidth="1.200"><path d="M.6.600h6.800v6.800H4L.6 4zM.6 4H4v3.400" /></svg>
      <Trash2 size={8} strokeWidth={2.700} />
    </div>
  </div>
);

/* ---------- floating character panel ---------- */

const serif = "font-['Liberation_Serif',serif] font-bold text-[#e2e2e2]";

const Drop = ({ c, children }: { c: string; children: React.ReactNode }) => (
  <div className={`flex h-[10px] shrink-0 items-center rounded-[1px] border border-[#5d5d5d] bg-[#454545] ${c}`}>
    <span className="flex-1 pl-[1px] whitespace-nowrap">{children}</span>
    <span className="flex h-full w-[8px] items-center justify-center border-l border-[#5d5d5d]"><Chev /></span>
  </div>
);

const UpDown = () => (
  <svg viewBox="0 0 4 9" className="h-[9px] w-[3px] shrink-0" fill={ink}><path d="M2 0 4 2.500H2.500v4H4L2 9 0 6.500h1.500v-4H0z" /></svg>
);

const CharacterPanel = () => (
  <div className="absolute top-[45.500px] left-[736px] flex h-[151.500px] w-[126px] flex-col border border-[#3a3a3a] bg-[#535353] text-[6.700px] leading-none text-[#e0e0e0] shadow-[0_1px_3px_rgba(0,0,0,0.35)]">
    <div className="flex h-[7.500px] shrink-0 items-center justify-end bg-[#424242] pr-[2px]"><Arrows c="mr-[5px]" /><X size={5} strokeWidth={4.500} /></div>
    <div className="flex h-[14.500px] shrink-0 items-center bg-[#424242] text-[#a4a4a4]">
      <span className="flex h-full w-[23px] items-center bg-[#535353] pl-[4.500px] font-medium text-[#eee]">字符</span>
      <span className="flex h-full w-[24px] items-center border-r border-[#3a3a3a] pl-[6px]">段落</span>
      <Burger c="mr-[3px] ml-auto" />
    </div>
    <div className="flex h-[21px] shrink-0 items-center pl-[3px]">
      <Drop c="mr-[7px] w-[67px]">苹方</Drop>
      <Drop c="w-[41px]">中等</Drop>
    </div>
    <div className="flex h-[12.500px] shrink-0 items-center">
      <span className={`w-[12.500px] text-[11px] tracking-[-0.3px] ${serif}`}><span className="text-[6px]">T</span>T</span>
      <Drop c="mr-[5px] w-[46px]">30 点</Drop>
      <span className={`flex w-[12px] items-center gap-px ${serif}`}>
        <UpDown />
        <span className="flex flex-col text-[6px] leading-[5px]"><span>A</span><span className="border-b border-[#ddd]">A</span></span>
      </span>
      <Drop c="w-[43px]">45 点</Drop>
    </div>
    <div className="flex h-[13px] shrink-0 items-center">
      <span className="w-[12.500px] text-[7px] tracking-[-0.5px]">V/<span className="border-b border-[#ddd]">A</span></span>
      <Drop c="mr-[5px] w-[46px]">0</Drop>
      <span className="w-[12px] text-[6.500px] tracking-[-0.300px]"><span className="border-b border-[#ddd] bg-[#ccc] font-bold text-[#333]">VA</span></span>
      <Drop c="w-[43px]">0</Drop>
    </div>
    <div className="flex h-[18px] shrink-0 items-center pt-[1px]">
      <span className={`flex w-[13px] items-center text-[12px] ${serif}`}><UpDown />T</span>
      <Field c="h-[10px] w-[29px] pl-[1px]">100%</Field>
      <span className={`ml-[33px] w-[11.500px] text-[11px] ${serif}`}><span className="border-b border-[#ddd]">T</span></span>
      <Field c="h-[10px] w-[29px] pl-[1px]">100%</Field>
    </div>
    <div className="flex h-[12px] shrink-0 items-center">
      <span className="flex w-[13px] items-center text-[7px]">A<span className="mb-[3px] text-[5px]">a</span><UpDown /></span>
      <Field c="h-[10px] w-[29px] pl-[1px]">0 点</Field>
      <span className="ml-[24px] w-[19.500px] whitespace-nowrap">颜色:</span>
      <span className="h-[11px] w-[30px] border border-[#434060] bg-[#2e2654]" />
    </div>
    <div className={`flex h-[19px] shrink-0 items-center pt-[2px] pl-[8px] text-[9px] ${serif}`}>
      <span className="w-[13.350px] text-center">T</span>
      <span className="w-[13.350px] text-center italic">T</span>
      <span className="w-[13.350px] text-center text-[8px] tracking-[-0.3px]">TT</span>
      <span className="w-[13.350px] text-center">T<span className="text-[6px]">T</span></span>
      <span className="w-[13.350px] text-center">T<span className="align-super text-[5px]">1</span></span>
      <span className="w-[13.350px] text-center">T<span className="text-[5px]">1</span></span>
      <span className="w-[13.350px] text-center underline">T</span>
      <span className="w-[13.350px] text-center line-through">T</span>
    </div>
    <div className="flex h-[17px] shrink-0 items-center pl-[8px] font-['Liberation_Serif',serif] text-[9px] text-[#a0a0a0]">
      <span className="flex h-[11.500px] w-[12.350px] items-center justify-center bg-[#303030] text-[10px] text-white">fi</span>
      <span className="w-[13.850px] text-center italic">o'</span>
      <span className="w-[13.350px] text-center font-bold text-[#e6e6e6]">st</span>
      <span className="w-[13.350px] text-center text-[10px] italic">A</span>
      <span className="w-[13.350px] text-center overline">ad</span>
      <span className="w-[13.350px] text-center text-[10px] italic">T</span>
      <span className="w-[13.350px] text-center">1<span className="align-super text-[6px]">st</span></span>
      <span className="w-[13.350px] text-center text-[10px] text-[#e6e6e6]">½</span>
    </div>
    <div className="flex h-[17px] shrink-0 items-center pt-[2px] pl-[3px]">
      <Field c="h-[11px] w-[64px] justify-between pr-[2px] pl-[4px]"><span>美国英语</span><Chev /></Field>
      <span className="w-[14.500px] pl-[4px] text-[6.500px]"><span className="align-super text-[5px]">a</span>a</span>
      <Field c="h-[11px] w-[36px] justify-between pr-[2px] pl-[4px]"><span>平滑</span><Chev /></Field>
    </div>
  </div>
);

/* ---------- desktop overlays ---------- */

const SpeedBall = ({ value }: { value: string }) => (
  <div className="absolute top-0 left-[700px] h-[33px] w-[66px]">
    <div className="absolute top-[5px] left-[16px] flex h-[23px] w-[50px] flex-col justify-center gap-[4px] rounded-full bg-[#20222e] pl-[18px] text-[6.500px] leading-[7px] text-[#e8e8e8]">
      <span className="flex items-center"><i className="mr-[11px] h-[3px] w-[2px] rounded-full bg-[#2fb3f2]" />0<span className="text-[5px] text-[#a8a8b4]">K/s</span></span>
      <span className="flex items-center"><i className="mr-[11px] h-[3px] w-[2px] rounded-full bg-[#25c03c]" />0<span className="text-[5px] text-[#a8a8b4]">K/s</span></span>
    </div>
    <svg viewBox="0 0 33 33" className="absolute top-0 left-0 h-[33px] w-[33px]" fill="none" strokeWidth="1.300">
      <circle cx="16.500" cy="16.500" r="16" fill="#343a4b" stroke="#252a38" strokeWidth="1" />
      <path d="M16.500 2.500A14 14 0 0 1 30 20" stroke="#39b9b5" />
      <path d="M30 20A14 14 0 0 1 21 29.800" stroke="#7fc27c" />
      <path d="M21 29.800A14 14 0 0 1 5 24.500" stroke="#c5bb45" />
    </svg>
    <div className="absolute top-0 left-0 flex h-[32px] w-[33px] items-center justify-center font-['Open_Sans',sans-serif] text-[14px] leading-none font-light text-[#e8ecf2]">
      {value}<span className="mt-[5px] text-[6px]">%</span>
    </div>
  </div>
);

const InputBar = () => (
  <div className="absolute top-[2px] left-[844px] flex h-[13px] w-[115px] items-center">
    <div className="z-10 flex h-[13px] w-[16px] -rotate-6 items-center justify-center rounded-[2px] bg-[#f0521c] font-['Liberation_Sans',sans-serif] text-[13px] leading-none font-bold text-white">S</div>
    <div className="flex h-[11px] flex-1 items-center justify-between bg-white pr-[3px] pl-[2px] text-[8px] leading-none font-bold text-[#1670c4]">
      <span>英</span>
      <span className="text-[7px]">•,</span>
      <Smile size={9} strokeWidth={2.600} />
      <Mic size={9} strokeWidth={2.600} fill="#1670c4" />
      <Keyboard size={9} strokeWidth={2.600} />
      <User size={9} strokeWidth={2.500} color="#a8bfd8" />
      <Shirt size={9} strokeWidth={2.500} fill="#1670c4" />
      <LayoutGrid size={9} strokeWidth={2.500} fill="#1670c4" />
    </div>
  </div>
);

const EditorWindow = ({ variant, place }: { variant: Variant; place: string }) => (
  <div className={`absolute flex h-[576px] w-[1064px] flex-col overflow-hidden bg-[#535353] ${place}`}>
    <MenuBar />
    <OptionsBar variant={variant} />
    <div className="flex min-h-0 flex-1 bg-[#3e3e3e]">
      <Toolbar variant={variant} />
      <Document variant={variant} />
      <Dock />
      <div className="mr-[2px] flex w-[138px] shrink-0 flex-col bg-[#535353]">
        <div className="flex h-[7px] shrink-0 items-center justify-end bg-[#424242] pr-[3px]"><Arrows /></div>
        <Properties />
        <div className="h-[1.500px] shrink-0 bg-[#3e3e3e]" />
        <Layers />
      </div>
      <EndDock />
    </div>
    <CharacterPanel />
    <SpeedBall value={variant === "pen" ? "64" : "66"} />
    <InputBar />
  </div>
);

export default function App() {
  return (
    <div className="relative h-[1080px] w-[1920px] overflow-hidden bg-white font-['Open_Sans','Noto_Sans_CJK_SC',sans-serif]">
      <EditorWindow variant="pen" place="top-[33px] left-[77px]" />
      <EditorWindow variant="select" place="top-[481px] left-[776px]" />
    </div>
  );
}
